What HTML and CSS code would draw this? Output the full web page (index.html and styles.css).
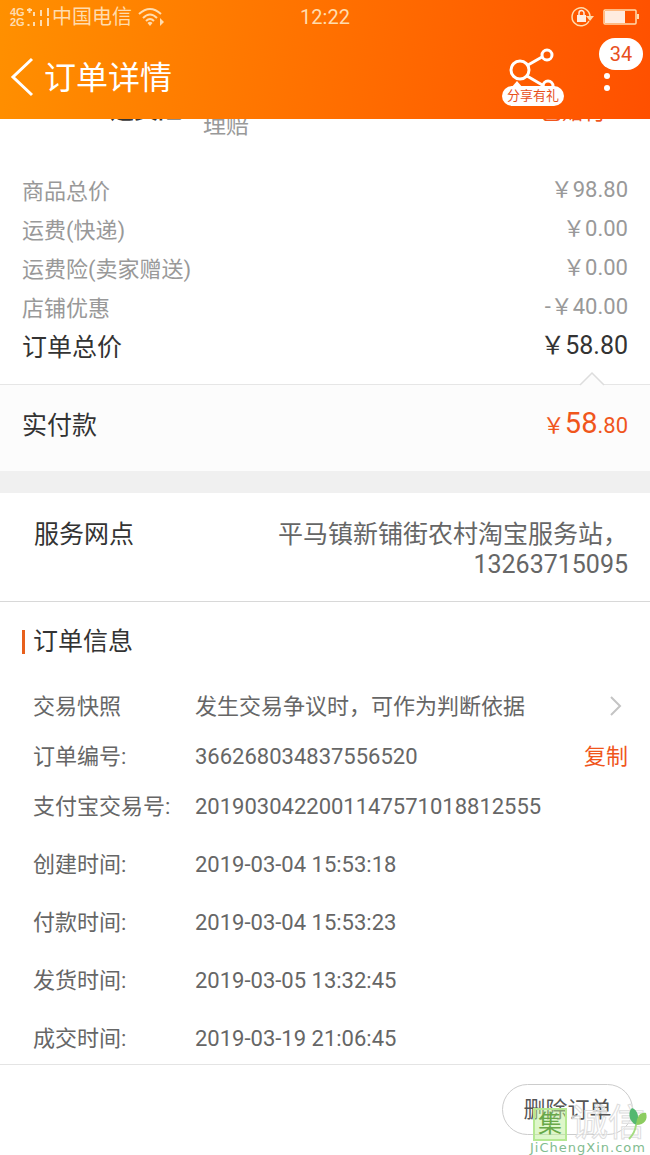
FILE: index.html
```html
<!DOCTYPE html>
<html lang="zh-CN">
<head>
<meta charset="UTF-8">
<meta name="viewport" content="width=device-width, initial-scale=1">
<title>订单详情</title>
<link rel="stylesheet" href="styles.css">
</head>
<body>
	<!-- 顶部栏 -->
	<header class="header">
		<div class="status">
			<div class="status-left">
				<svg width="42" height="20" viewBox="0 0 42 20" aria-hidden="true">
					<g font-family="Liberation Sans, sans-serif" font-size="11" font-weight="bold" fill="currentColor">
						<text x="0" y="9">4G</text>
						<text x="0" y="19">2G</text>
					</g>
					<path d="M17 3h5M19.500 1v5M18.500 17v2M24 5v4M24 15v4M31 3v6M31 13v6M38 1v8M38 11v8" fill="none" stroke="currentColor" stroke-width="2"/>
				</svg>
				<span>中国电信</span>
				<svg class="wifi" width="28" height="20" viewBox="0 0 28 20" aria-hidden="true">
					<g fill="none" stroke="currentColor" stroke-width="2">
						<path d="M1 7Q12 -3 23 7"/>
						<path d="M5 11Q12 4 19 11"/>
						<path d="M8 14Q12 10 16 14"/>
					</g>
					<path d="M9.500 16Q12 13.500 14.500 16L12 19zM22 11l4 4-4 4z" fill="currentColor"/>
				</svg>
			</div>
			<span class="clock">12:22</span>
			<div class="status-right">
				<svg width="24" height="20" viewBox="0 0 24 20" aria-hidden="true">
					<path d="M18 14A9 9 0 1 1 19 9" fill="none" stroke="currentColor" stroke-width="1.500"/>
					<path d="M15 9h8l-4 5z" fill="currentColor"/>
					<path d="M6 8h9v7H6z" fill="#ffece0"/>
					<path d="M8 8V6a2.500 2.500 0 0 1 5 0v2" fill="none" stroke="#ffece0" stroke-width="1.500"/>
				</svg>
				<svg width="37" height="16" viewBox="0 0 37 16" aria-hidden="true">
					<rect x="1" y="1" width="32" height="14" rx="1" fill="none" stroke="currentColor" stroke-width="1.500"/>
					<path d="M2 2h20v12H2z" fill="#ffece0"/>
					<path d="M34 5h2v5h-2z" fill="currentColor"/>
				</svg>
			</div>
		</div>
		<div class="nav">
			<a class="back" href="#" aria-label="返回">
				<svg width="24" height="40" viewBox="0 0 24 40"><path d="M21 1L2 19L21 37" fill="none" stroke="#fff" stroke-width="3"/></svg>
			</a>
			<h1>订单详情</h1>
			<button class="share" type="button">
				<svg width="62" height="46" viewBox="0 0 62 46" aria-hidden="true">
					<g fill="none" stroke="#fff" stroke-width="3">
						<circle cx="18" cy="20" r="9"/>
						<circle cx="45" cy="5" r="5"/>
						<circle cx="46" cy="36" r="5"/>
						<path d="M26 15L40 7M25 26L42 36"/>
					</g>
					<path d="M9 38l6-7 6 7z" fill="#fff"/>
				</svg>
				<span>分享有礼</span>
			</button>
			<button class="more" type="button" aria-label="更多">
				<svg width="8" height="32" viewBox="0 0 8 32"><g fill="#fff"><circle cx="3" cy="2" r="3"/><circle cx="3" cy="14" r="3"/><circle cx="3" cy="26" r="3"/></g></svg>
				<span class="badge">34</span>
			</button>
		</div>
	</header>

	<main>
		<!-- 运费险 -->
		<section class="insurance">
			<strong>运费险</strong>
			<span class="insurance-text">理赔</span>
			<span class="insurance-state">已赠付</span>
		</section>

		<!-- 价格 -->
		<dl class="prices">
			<div><dt>商品总价</dt><dd>￥98.80</dd></div>
			<div><dt>运费(快递)</dt><dd>￥0.00</dd></div>
			<div><dt>运费险(卖家赠送)</dt><dd>￥0.00</dd></div>
			<div><dt>店铺优惠</dt><dd>-￥40.00</dd></div>
			<div class="sum"><dt>订单总价</dt><dd>￥58.80</dd></div>
		</dl>
		<section class="paid">
			<svg class="arrow" width="26" height="14" viewBox="0 0 26 14" aria-hidden="true"><path d="M1 13L13 1L25 13V14H1z" fill="#fcfcfc"/><path d="M1 13L13 1L25 13" fill="none" stroke="#ddd" stroke-width="1.500"/></svg>
			<h2>实付款</h2>
			<p>￥<b>58</b>.80</p>
		</section>

		<!-- 服务网点 -->
		<section class="service">
			<h2>服务网点</h2>
			<p>平马镇新铺街农村淘宝服务站，<br>13263715095</p>
		</section>

		<!-- 订单信息 -->
		<section class="info">
			<h2>订单信息</h2>
			<dl>
				<div>
					<dt>交易快照</dt>
					<dd>发生交易争议时，可作为判断依据</dd>
					<dd class="action"><a href="#" aria-label="查看交易快照"><svg width="18" height="24" viewBox="0 0 18 24"><path d="M1 2l9 9-9 9" fill="none" stroke="#c4c4c4" stroke-width="2"/></svg></a></dd>
				</div>
				<div>
					<dt>订单编号:</dt>
					<dd>366268034837556520</dd>
					<dd class="action"><button type="button">复制</button></dd>
				</div>
				<div><dt>支付宝交易号:</dt><dd>2019030422001147571018812555</dd></div>
				<div class="time"><dt>创建时间:</dt><dd>2019-03-04 15:53:18</dd></div>
				<div class="time"><dt>付款时间:</dt><dd>2019-03-04 15:53:23</dd></div>
				<div class="time"><dt>发货时间:</dt><dd>2019-03-05 13:32:45</dd></div>
				<div class="time"><dt>成交时间:</dt><dd>2019-03-19 21:06:45</dd></div>
			</dl>
		</section>
	</main>

	<!-- 底部操作 -->
	<footer class="footer">
		<button type="button">删除订单</button>
		<div class="mark">
			<div class="mark-top">
				<span class="seal">集</span>
				<span class="mark-name">诚信</span>
				<svg class="leaf" width="20" height="34" viewBox="0 0 20 34" aria-hidden="true">
					<path d="M8 18C0 14 0 4 4 1C10 3 12 11 8 18z" fill="#54b870"/>
					<path d="M8 18C9 8 13 5 18 6C20 12 17 18 8 18z" fill="#8ccc60"/>
					<path d="M8 18Q7 26 1 32" fill="none" stroke="#a5dc80" stroke-width="2"/>
				</svg>
			</div>
			<span class="mark-url">JiChengXin.com</span>
		</div>
	</footer>
</body>
</html>
```
FILE: styles.css
```css
* {
  box-sizing: border-box;
}

body {
  margin: 0;
  min-height: 100vh;
  display: flex;
  flex-direction: column;
  font-family: Roboto, "Noto Sans CJK SC", sans-serif;
  font-size: 22px;
  line-height: 34px;
  color: #666;
  background-color: #fff;
}

h1, h2, p, dl, dd {
  margin: 0;
  font-weight: normal;
}

h2 {
  font-size: 25px;
  color: #333;
}

button {
  font: inherit;
  border: none;
  padding: 0;
  background: none;
  cursor: pointer;
}

svg {
  display: block;
  overflow: visible;
}

/* Шапка лежит поверх прокрученного списка */
.header {
  position: fixed;
  top: 0;
  left: 0;
  right: 0;
  z-index: 2;
  height: 119px;
  color: #fff;
  background: linear-gradient(100deg, #ff9000, #ff5000);
}

.status {
  display: grid;
  grid-template-columns: 1fr auto 1fr;
  align-items: center;
  height: 34px;
  padding: 0 10px;
  font-size: 20px;
  color: #ffdcae;
}

.status-left, .status-right {
  display: flex;
  align-items: center;
}

.wifi {
  margin-left: 6px;
}

.status-right {
  justify-content: flex-end;
  gap: 8px;
}

.nav {
  display: flex;
  align-items: center;
  height: 87px;
  padding: 0 22px 0 11px;
}

.nav h1 {
  flex-grow: 1;
  margin-left: 9px;
  font-size: 32px;
}

.share {
  width: 62px;
  margin-right: 40px;
}

.share span {
  display: block;
  margin-top: -10px;
  border-radius: 10px;
  font-size: 13px;
  line-height: 20px;
  color: #e8501c;
  background-color: #fff;
  position: relative;
}

.more {
  position: relative;
  width: 14px;
  margin-right: 10px;
}

.badge {
  position: absolute;
  left: -5px;
  top: -24px;
  width: 44px;
  border-radius: 16px;
  font-size: 20px;
  line-height: 32px;
  color: #e8501c;
  background-color: #fff;
}

main {
  flex-grow: 1;
}

.insurance {
  display: flex;
  padding: 96px 44px 30px 110px;
  line-height: 28px;
}

.insurance strong {
  width: 93px;
  font-size: 24px;
  color: #333;
}

.insurance-text {
  padding-top: 16px;
  font-size: 23px;
  color: #999;
}

.insurance-state {
  margin-left: auto;
  padding-top: 2px;
  color: #f0561c;
}

.prices {
  padding: 2px 22px 16px;
  line-height: 39px;
  color: #999;
}

.prices div {
  display: flex;
  justify-content: space-between;
}

.prices dd {
  line-height: 36px;
}

.prices .sum {
  font-size: 25px;
  line-height: 40px;
  color: #333;
}

.paid {
  position: relative;
  display: flex;
  justify-content: space-between;
  align-items: center;
  padding: 24px 22px 28px;
  border-top: 1px solid #e6e6e6;
  border-bottom: 22px solid #f0f0f0;
  background-color: #fcfcfc;
}

.paid p {
  color: #f0561c;
}

.paid b {
  font-size: 29px;
  font-weight: normal;
  line-height: 1;
}

.arrow {
  position: absolute;
  right: 45px;
  top: -13px;
}

.service {
  display: flex;
  justify-content: space-between;
  padding: 27px 22px 21px 34px;
  border-bottom: 1px solid #d8d8d8;
  font-size: 25px;
  line-height: 30px;
}

.service p {
  text-align: right;
}

.info {
  padding: 23px 22px 7px;
}

.info h2 {
  display: flex;
  align-items: center;
  gap: 8px;
  margin-bottom: 31px;
}

.info h2::before {
  content: "";
  width: 3px;
  height: 24px;
  background-color: #e8601c;
}

.info dl {
  display: flex;
  flex-direction: column;
  gap: 16px;
  padding-left: 11px;
}

.info dl div {
  display: flex;
  align-items: center;
}

.info .time {
  margin-top: 8px;
}

.info dt {
  width: 162px;
}

.info .action {
  margin-left: auto;
}

.info .action button {
  color: #f0561c;
}

.footer {
  position: relative;
  display: flex;
  justify-content: flex-end;
  padding: 19px 17px 20px;
  border-top: 1px solid #e4e4e4;
}

.footer button {
  width: 131px;
  height: 51px;
  border: 1px solid #ccc;
  border-radius: 26px;
  color: #555;
}

/* Водяной знак */
.mark {
  position: absolute;
  right: 0;
  bottom: 0;
  width: 120px;
  pointer-events: none;
}

.mark-top {
  display: flex;
  align-items: center;
  gap: 4px;
  padding-left: 3px;
}

.seal {
  width: 34px;
  border: 2px solid #b5e892;
  font-size: 24px;
  line-height: 29px;
  text-align: center;
  color: #68a848;
  background-color: rgba(190, 240, 150, 0.5);
}

.mark-name {
  font-size: 37px;
  color: rgba(255, 255, 255, 0.6);
  -webkit-text-stroke: 1px #ddd;
}

.leaf {
  position: absolute;
  right: 2px;
  top: 0;
}

.mark-url {
  display: block;
  font-family: "DejaVu Sans", sans-serif;
  font-size: 13px;
  line-height: 14px;
  letter-spacing: 1px;
  color: #82bc90;
}
```
